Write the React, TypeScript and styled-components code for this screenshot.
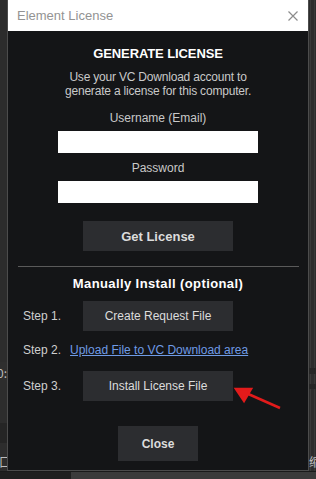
import styled, { createGlobalStyle } from "styled-components";

const GlobalStyle = createGlobalStyle`
    html, body {
        margin: 0;
        padding: 0;
        background: #2b2b2b;
    }
    body {
        font-family: "Liberation Sans", Arial, sans-serif;
    }
`;

const App = () => {
    return (
        <>
            <GlobalStyle />
            <Screen>
                <SideStrip>
                    <Band $top={0} $height={340} $color="#2c2c2c" />
                    <Band $top={362} $height={18} $color="#2f2f2f" />
                    <StripGlyph $top={366} $left={-3}>0:</StripGlyph>
                    <Band $top={423} $height={20} $color="#252525" />
                    <StripGlyph $top={455} $left={-1}>口</StripGlyph>
                </SideStrip>

                <Dialog>
                    <TitleBar>
                        <Title>Element License</Title>
                        <CloseIcon viewBox="0 0 10 10">
                            <path d="M0.5 0.5 L9.5 9.5 M9.5 0.5 L0.5 9.5" />
                        </CloseIcon>
                    </TitleBar>

                    <Body>
                        <Heading>GENERATE LICENSE</Heading>
                        <Description>
                            Use your VC Download account to
                            <br />
                            generate a license for this computer.
                        </Description>

                        <FieldLabel $gap={13}>Username (Email)</FieldLabel>
                        <TextInput />
                        <FieldLabel $gap={8}>Password</FieldLabel>
                        <TextInput type="password" />

                        <ActionButton $bold $gap={18}>
                            Get License
                        </ActionButton>

                        <Separator />

                        <SubHeading>Manually Install (optional)</SubHeading>

                        <StepRow $gap={9}>
                            <StepLabel $fixed>Step 1.</StepLabel>
                            <ActionButton>Create Request File</ActionButton>
                        </StepRow>
                        <StepRow $gap={11}>
                            <StepLabel>Step 2.</StepLabel>
                            <StepLink href="#">Upload File to VC Download area</StepLink>
                        </StepRow>
                        <StepRow $gap={13}>
                            <StepLabel $fixed>Step 3.</StepLabel>
                            <ActionButton>Install License File</ActionButton>
                        </StepRow>

                        <CloseButton>Close</CloseButton>
                    </Body>

                    <Arrow viewBox="0 0 50 24">
                        <path d="M46 21 L12 6" />
                        <polygon points="2,2 17,2 10,14" />
                    </Arrow>
                </Dialog>

                <SideStrip>
                    <RuleLine $left={1} />
                    <RuleLine $left={5} />
                    <Band $top={368} $height={6} $color="#262626" />
                    <Band $top={384} $height={5} $color="#262626" />
                    <StripGlyph $top={455} $left={0}>缩</StripGlyph>
                </SideStrip>

                <BottomBar>
                    <BottomDark />
                    <BottomLight />
                </BottomBar>
            </Screen>
        </>
    );
};

const Screen = styled.div`
    display: grid;
    grid-template-columns: 7px 302px 7px;
    grid-template-rows: 471px 8px;
    width: 316px;
    height: 479px;
    overflow: hidden;
    background: #2b2b2b;
`;

const SideStrip = styled.div`
    position: relative;
    overflow: hidden;
    background: #2d2d2d;
`;

const Band = styled.div<{ $top: number; $height: number; $color: string }>`
    position: absolute;
    left: 0;
    right: 0;
    top: ${({ $top }) => $top}px;
    height: ${({ $height }) => $height}px;
    background: ${({ $color }) => $color};
`;

const RuleLine = styled.div<{ $left: number }>`
    position: absolute;
    top: 0;
    bottom: 0;
    left: ${({ $left }) => $left}px;
    width: 1px;
    background: #3a3a3a;
`;

const StripGlyph = styled.span<{ $top: number; $left: number }>`
    position: absolute;
    top: ${({ $top }) => $top}px;
    left: ${({ $left }) => $left}px;
    font-family: "Noto Sans CJK SC", "Liberation Sans", sans-serif;
    font-size: 12px;
    line-height: 14px;
    color: #bdbdbd;
    white-space: nowrap;
`;

const Dialog = styled.div`
    position: relative;
    display: flex;
    flex-direction: column;
    border: 1px solid #4c4c4c;
    border-top: none;
    background: #141517;
`;

const TitleBar = styled.div`
    display: flex;
    align-items: center;
    justify-content: space-between;
    height: 31px;
    padding: 0 10px 0 9px;
    background: #ffffff;
`;

const Title = styled.span`
    font-size: 13px;
    color: #939393;
`;

const CloseIcon = styled.svg`
    width: 10px;
    height: 10px;
    fill: none;
    stroke: #8c8c8c;
    stroke-width: 1.2;
`;

const Body = styled.div`
    flex: 1;
    display: flex;
    flex-direction: column;
    align-items: center;
    padding-top: 15px;
    color: #cfcfcf;
`;

const Heading = styled.div`
    font-size: 13px;
    line-height: 16px;
    font-weight: bold;
    color: #ffffff;
    letter-spacing: -0.1px;
`;

const Description = styled.div`
    margin-top: 8px;
    font-size: 12px;
    line-height: 14px;
    text-align: center;
    color: #c9c9c9;
    letter-spacing: -0.2px;
`;

const FieldLabel = styled.div<{ $gap: number }>`
    margin-top: ${({ $gap }) => $gap}px;
    font-size: 12px;
    line-height: 14px;
    color: #c9c9c9;
`;

const TextInput = styled.input`
    box-sizing: border-box;
    margin-top: 6px;
    width: 200px;
    height: 22px;
    border: none;
    outline: none;
    background: #ffffff;
`;

const ActionButton = styled.button<{ $bold?: boolean; $gap?: number }>`
    margin-top: ${({ $gap }) => $gap || 0}px;
    width: 150px;
    height: 30px;
    border: none;
    padding: 0;
    background: #2c2d30;
    font-family: inherit;
    font-size: ${({ $bold }) => ($bold ? "13px" : "12px")};
    font-weight: ${({ $bold }) => ($bold ? "bold" : "normal")};
    color: #dcdcdc;
`;

const Separator = styled.div`
    align-self: stretch;
    margin: 15px 9px 0 10px;
    height: 1px;
    background: #5a5a5a;
`;

const SubHeading = styled(Heading)`
    margin-top: 9px;
    letter-spacing: 0.4px;
`;

const StepRow = styled.div<{ $gap: number }>`
    align-self: stretch;
    display: flex;
    align-items: center;
    margin-top: ${({ $gap }) => $gap}px;
    padding-left: 15px;
`;

const StepLabel = styled.span<{ $fixed?: boolean }>`
    width: ${({ $fixed }) => ($fixed ? "60px" : "auto")};
    margin-right: ${({ $fixed }) => ($fixed ? "0" : "9px")};
    font-size: 12px;
    line-height: 16px;
    color: #cfcfcf;
`;

const StepLink = styled.a`
    font-size: 12px;
    line-height: 16px;
    color: #6f9be6;
    text-decoration: underline;
`;

const CloseButton = styled.button`
    margin-top: 25px;
    width: 80px;
    height: 35px;
    border: none;
    padding: 0;
    background: #2c2d30;
    font-family: inherit;
    font-size: 12px;
    font-weight: bold;
    color: #dcdcdc;
`;

const Arrow = styled.svg`
    position: absolute;
    left: 226px;
    top: 387px;
    width: 50px;
    height: 24px;
    stroke: #e21b1b;
    stroke-width: 2.5;
    fill: #e21b1b;
    overflow: visible;
`;

const BottomBar = styled.div`
    grid-column: 1 / -1;
    display: grid;
    grid-template-columns: 71px 1fr;
    border-top: 1px solid #1a1a1a;
`;

const BottomDark = styled.div`
    background: #1f1f1f;
`;

const BottomLight = styled.div`
    background: #3b3b3b;
`;

export default App;
